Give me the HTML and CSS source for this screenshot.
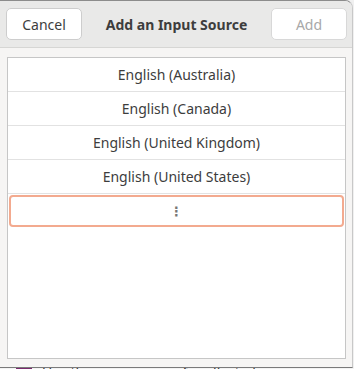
FILE: index.html
```html
<!DOCTYPE html>
<html>
<head>
<meta charset="utf-8">
<link rel="stylesheet" href="styles.css">
</head>
<body>
<div class="window">
  <header class="header">
    <button class="btn">Cancel</button>
    <div class="title">Add an Input Source</div>
    <button class="btn disabled">Add</button>
  </header>
  <main class="content">
    <div class="list">
      <div class="row">English (Australia)</div>
      <div class="row">English (Canada)</div>
      <div class="row">English (United Kingdom)</div>
      <div class="row">English (United States)</div>
      <div class="row more"><span class="dots">⋮</span></div>
    </div>
  </main>
</div>
<div class="behind">
  <span class="icon"></span>
  <span class="behind-text">Use the same source for all windows</span>
</div>
</body>
</html>
```

FILE: styles.css
```css
html, body {
  margin: 0;
  padding: 0;
}
body {
  width: 354px;
  height: 369px;
  overflow: hidden;
  background: #f0f0f0;
  font-family: "Noto Sans", "DejaVu Sans", sans-serif;
  color: #3d3d3d;
}
.window {
  width: 352px;
  height: 366px;
  display: flex;
  flex-direction: column;
  background: #f6f5f4;
  border-top: 1px solid #8c8c8c;
  border-right: 1px solid #c8c8c8;
  border-bottom: 1px solid #7a7a7a;
  border-top-right-radius: 8px;
  overflow: hidden;
}
.header {
  height: 46px;
  flex: none;
  display: flex;
  align-items: center;
  justify-content: space-between;
  padding: 0 5px 0 6px;
  background: #e9e9e8;
  border-bottom: 1px solid #d6d6d4;
}
.btn {
  width: 76px;
  height: 32px;
  border: 1px solid #cdcdcd;
  border-radius: 5px;
  background: #ffffff;
  font-family: inherit;
  font-size: 14px;
  color: #3d3d3d;
  padding: 0;
}
.btn.disabled {
  color: #a8a8a8;
  border-color: #d8d8d8;
}
.title {
  font-weight: bold;
  font-size: 14px;
  color: #3d3d3d;
}
.content {
  flex: 1;
  padding: 9px 6px 8px 7px;
  display: flex;
}
.list {
  flex: 1;
  background: #ffffff;
  border: 1px solid #c6c6c6;
  display: flex;
  flex-direction: column;
}
.row {
  height: 33px;
  display: flex;
  align-items: center;
  justify-content: center;
  font-size: 14px;
  color: #3d3d3d;
  border-bottom: 1px solid #e2e2e2;
}
.row.more {
  height: 28px;
  margin: 1px 1px 0 1px;
  border: 2px solid #f3aa8f;
  border-radius: 4px;
}
.dots {
  color: #777777;
  font-size: 13px;
  font-weight: bold;
}
.behind {
  height: 2px;
  overflow: hidden;
  display: flex;
  align-items: flex-start;
  gap: 10px;
  padding-left: 16px;
  background: #f3f3f3;
}
.icon {
  width: 16px;
  height: 16px;
  background: #7a2a6e;
  flex: none;
}
.behind-text {
  font-size: 14px;
  line-height: 14px;
  margin-top: -2px;
  color: #333;
}
```
